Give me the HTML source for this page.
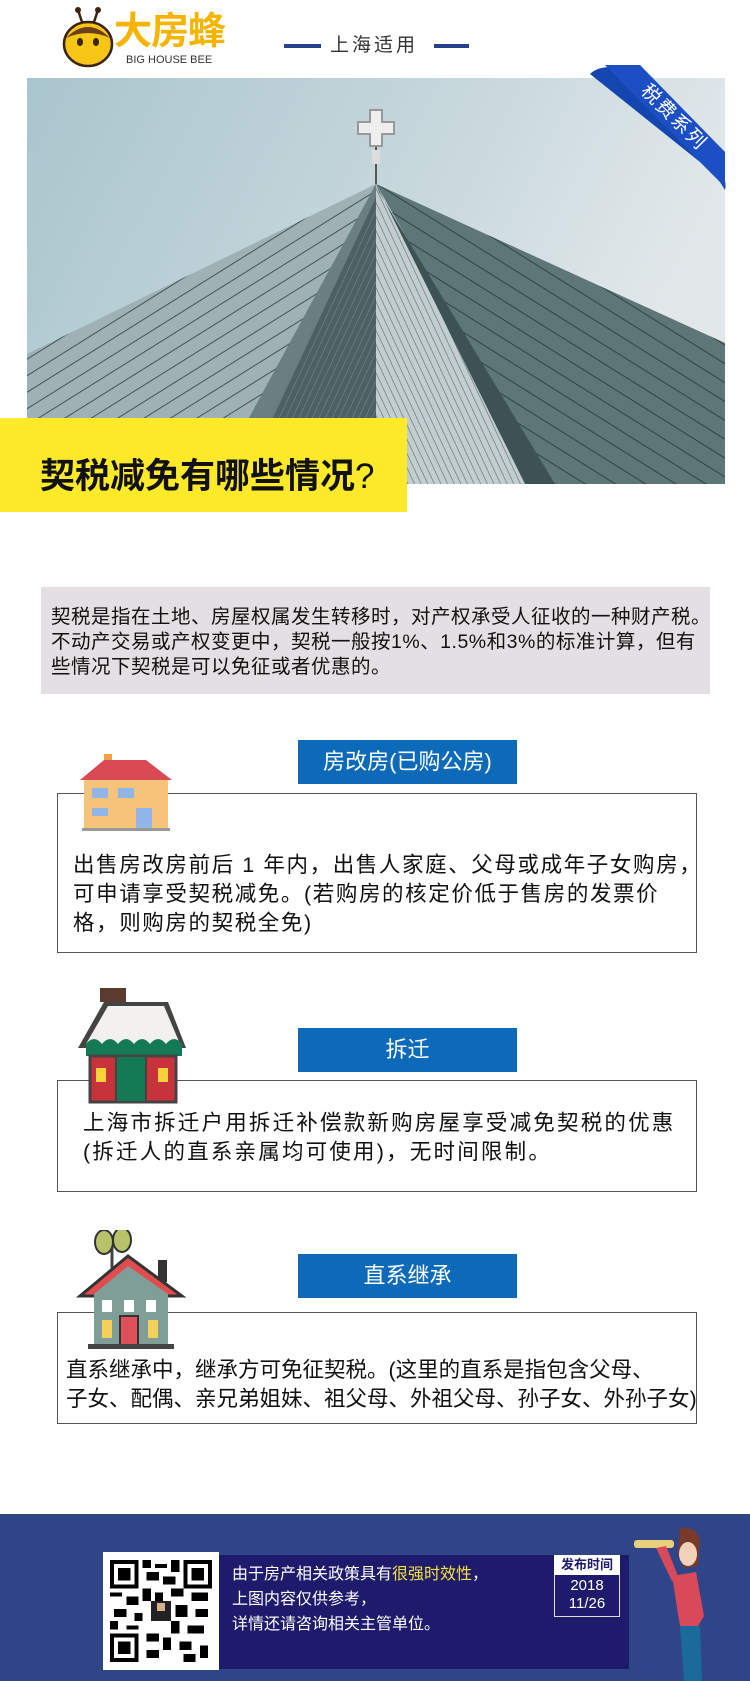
<!DOCTYPE html>
<html><head><meta charset="utf-8">
<style>
*{margin:0;padding:0;box-sizing:border-box}
body{width:750px;height:1681px;background:#fff;position:relative;overflow:hidden;font-family:"Liberation Sans","Noto Sans CJK SC",sans-serif;color:#111}
.abs{position:absolute}
.label{position:absolute;left:298px;width:219px;height:44px;background:#0d6ab9;color:#fff;font-size:22px;text-align:center;line-height:44px}
.box{position:absolute;left:57px;width:640px;border:1.5px solid #555;background:#fff}
.txt{position:absolute;font-size:21.5px;line-height:29px;color:#111;white-space:nowrap}
</style></head><body>

<!-- logo -->
<svg class="abs" style="left:58px;top:6px" width="60" height="62" viewBox="0 0 60 62">
<line x1="24" y1="16" x2="20" y2="4" stroke="#3a2412" stroke-width="2.5"/><circle cx="20" cy="4" r="3" fill="#3a2412"/>
<line x1="36" y1="16" x2="40" y2="4" stroke="#3a2412" stroke-width="2.5"/><circle cx="40" cy="4" r="3" fill="#3a2412"/>
<ellipse cx="30" cy="38" rx="24" ry="22" fill="#f7c515" stroke="#3a2412" stroke-width="2.5"/>
<path d="M8 32 Q30 10 52 32 Q30 22 8 32Z" fill="#6b3f1e"/>
<ellipse cx="22" cy="36" rx="3" ry="4" fill="#3a2412"/><ellipse cx="38" cy="36" rx="3" ry="4" fill="#3a2412"/>
</svg>
<div class="abs" style="left:114px;top:12px;font-size:38px;font-weight:bold;color:#f5b400;letter-spacing:-1px;line-height:40px">大房蜂</div>
<div class="abs" style="left:126px;top:54px;font-size:11px;color:#333;line-height:13px">BIG HOUSE BEE</div>
<div class="abs" style="left:284px;top:44px;width:37px;height:4px;background:#27408b"></div>
<div class="abs" style="left:434px;top:44px;width:35px;height:4px;background:#27408b"></div>
<div class="abs" style="left:330px;top:33px;font-size:19px;color:#333;letter-spacing:3px;line-height:26px">上海适用</div>

<!-- photo -->
<svg class="abs" style="left:27px;top:78px" width="698" height="406" viewBox="0 0 698 406">
<defs>
<linearGradient id="sky" x1="0" y1="0" x2="1" y2="0.3"><stop offset="0" stop-color="#a9c5cd"/><stop offset="0.6" stop-color="#c8d8dd"/><stop offset="1" stop-color="#e2e8ea"/></linearGradient>
<pattern id="s1" width="14" height="14" patternUnits="userSpaceOnUse" patternTransform="rotate(-32)"><rect width="14" height="14" fill="#9fb1b4"/><line x1="0" y1="0" x2="14" y2="0" stroke="#3f5458" stroke-width="2"/></pattern>
<pattern id="s2" width="6" height="6" patternUnits="userSpaceOnUse" patternTransform="rotate(-65)"><rect width="6" height="6" fill="#4d6164"/><line x1="0" y1="0" x2="6" y2="0" stroke="#7c8f92" stroke-width="1"/></pattern>
<pattern id="s3" width="6" height="6" patternUnits="userSpaceOnUse" patternTransform="rotate(65)"><rect width="6" height="6" fill="#c2cecf"/><line x1="0" y1="0" x2="6" y2="0" stroke="#5b6d70" stroke-width="1.2"/></pattern>
<pattern id="s4" width="16" height="16" patternUnits="userSpaceOnUse" patternTransform="rotate(32)"><rect width="16" height="16" fill="#5e7675"/><line x1="0" y1="0" x2="16" y2="0" stroke="#2f4445" stroke-width="2"/></pattern>
</defs>
<rect width="698" height="406" fill="url(#sky)"/>
<polygon points="349,106 0,276 0,406 200,406" fill="url(#s1)"/>
<polygon points="349,106 190,406 349,406" fill="url(#s2)"/>
<polygon points="349,106 349,406 510,406" fill="url(#s3)"/>
<polygon points="349,106 520,406 698,406 698,265" fill="url(#s4)"/>
<polygon points="349,106 186,406 214,406 349,118" fill="#6a7f82"/>
<polygon points="349,106 498,406 528,406 352,114" fill="#3d5253"/>
<line x1="349" y1="106" x2="349" y2="68" stroke="#555" stroke-width="2"/>
<rect x="345" y="72" width="8" height="14" fill="#ddd"/>
<path d="M343 32h12v12h12v12h-12v12h-12v-12h-12v-12h12z" fill="#eee" stroke="#999" stroke-width="2"/>
</svg>
<!-- ribbon -->
<svg class="abs" style="left:580px;top:62px" width="150" height="130" viewBox="0 0 150 130">
<path d="M10 12 Q20 2 45 6 L110 70 Q150 110 145 128 L140 120 L120 100 Z" fill="#1546b0"/>
<path d="M25 3 L60 3 L145 90 L145 125 Z" fill="#1c4fc4"/>
<text x="0" y="0" transform="translate(60 30) rotate(45)" font-size="19" fill="#fff" font-family="Liberation Sans,Noto Sans CJK SC,sans-serif" letter-spacing="2">税费系列</text>
</svg>
<div class="abs" style="left:0;top:418px;width:407px;height:94px;background:#fbe92a"></div>
<div class="abs" style="left:40px;top:456px;font-size:35px;font-weight:bold;line-height:42px;color:#111">契税减免有哪些情况<span style="font-weight:normal">?</span></div>

<!-- intro -->
<div class="abs" style="left:41px;top:587px;width:669px;height:107px;background:#e4dfe2"></div>
<div class="abs" style="left:51px;top:605px;font-size:19.5px;line-height:25px;color:#111;white-space:nowrap;letter-spacing:0.5px">契税是指在土地、房屋权属发生转移时，对产权承受人征收的一种财产税。<br>不动产交易或产权变更中，契税一般按1%、1.5%和3%的标准计算，但有<br>些情况下契税是可以免征或者优惠的。</div>

<!-- section 1 -->
<div class="label" style="top:740px">房改房(已购公房)</div>
<div class="box" style="top:793px;height:160px"></div>
<svg class="abs" style="left:78px;top:752px" width="96" height="82" viewBox="0 0 96 82">
<rect x="26" y="2" width="8" height="12" fill="#f2a04a"/>
<rect x="6" y="26" width="84" height="50" fill="#f6c37a"/>
<polygon points="2,28 26,8 68,8 94,28" fill="#d94a55"/>
<rect x="14" y="36" width="16" height="10" fill="#8fb6e6"/><rect x="40" y="36" width="16" height="10" fill="#8fb6e6"/>
<rect x="14" y="56" width="16" height="8" fill="#8fb6e6"/><rect x="58" y="56" width="16" height="20" fill="#8fb6e6"/>
<rect x="4" y="76" width="88" height="3" fill="#999"/>
</svg>
<div class="txt" style="left:73px;top:851px;letter-spacing:1.6px">出售房改房前后 1 年内，出售人家庭、父母或成年子女购房，<br>可申请享受契税减免。(若购房的核定价低于售房的发票价<br>格，则购房的契税全免)</div>

<!-- section 2 -->
<div class="label" style="top:1028px">拆迁</div>
<div class="box" style="top:1080px;height:112px"></div>
<svg class="abs" style="left:74px;top:986px" width="116" height="118" viewBox="0 0 116 118">
<rect x="26" y="2" width="26" height="14" fill="#5a3b2e"/>
<polygon points="4,62 30,16 94,16 112,62" fill="#444"/>
<polygon points="12,58 34,20 90,20 106,58" fill="#f3f0f0"/>
<path d="M12 58 Q20 48 28 58 Q36 48 44 58 Q52 48 60 58 Q68 48 76 58 Q84 48 92 58 Q100 48 108 58 L108 70 L12 70Z" fill="#147a55"/>
<rect x="16" y="70" width="86" height="46" fill="#c8323a" stroke="#444" stroke-width="3"/>
<rect x="42" y="70" width="30" height="46" fill="#147a55" stroke="#444" stroke-width="2"/>
<rect x="22" y="82" width="10" height="14" fill="#f5d23a"/><rect x="84" y="82" width="10" height="14" fill="#f5d23a"/>
</svg>
<div class="txt" style="left:83px;top:1109px;letter-spacing:2.2px">上海市拆迁户用拆迁补偿款新购房屋享受减免契税的优惠<br>(拆迁人的直系亲属均可使用)，无时间限制。</div>

<!-- section 3 -->
<div class="label" style="top:1254px">直系继承</div>
<div class="box" style="top:1312px;height:112px"></div>
<svg class="abs" style="left:76px;top:1230px" width="110" height="120" viewBox="0 0 110 120">
<line x1="36" y1="48" x2="36" y2="12" stroke="#444" stroke-width="3"/>
<ellipse cx="28" cy="12" rx="9" ry="12" fill="#b8c26a" stroke="#333" stroke-width="2"/>
<ellipse cx="46" cy="10" rx="9" ry="12" fill="#b8c26a" stroke="#333" stroke-width="2"/>
<rect x="82" y="30" width="9" height="22" fill="#333"/>
<polygon points="4,66 52,26 106,66" fill="#e04c50" stroke="#333" stroke-width="3"/>
<polygon points="18,64 52,36 92,64 92,116 18,116" fill="#7e9e96"/>
<rect x="26" y="70" width="10" height="12" fill="#fff"/><rect x="48" y="70" width="10" height="12" fill="#fff"/><rect x="70" y="70" width="10" height="12" fill="#fff"/>
<rect x="26" y="90" width="10" height="18" fill="#f4cf5a"/><rect x="72" y="90" width="10" height="18" fill="#f4cf5a"/>
<rect x="44" y="86" width="18" height="30" fill="#e0505a" stroke="#333" stroke-width="2"/>
<rect x="12" y="114" width="86" height="5" fill="#444"/>
</svg>
<div class="txt" style="left:66px;top:1356px">直系继承中，继承方可免征契税。(这里的直系是指包含父母、<br>子女、配偶、亲兄弟姐妹、祖父母、外祖父母、孙子女、外孙子女)</div>

<!-- footer -->
<div class="abs" style="left:0;top:1514px;width:750px;height:167px;background:#2f4587"></div>
<div class="abs" style="left:219px;top:1555px;width:410px;height:114px;background:#1e1a6c"></div>
<div class="abs" style="left:103px;top:1552px;width:116px;height:118px;background:#fff"></div>
<svg class="abs" style="left:110px;top:1560px" width="102" height="102" viewBox="0 0 25 25" shape-rendering="crispEdges">
<rect x="0" y="0" width="7" height="7" fill="#000"/><rect x="1" y="1" width="5" height="5" fill="#fff"/><rect x="2" y="2" width="3" height="3" fill="#000"/>
<rect x="18" y="0" width="7" height="7" fill="#000"/><rect x="19" y="1" width="5" height="5" fill="#fff"/><rect x="20" y="2" width="3" height="3" fill="#000"/>
<rect x="0" y="18" width="7" height="7" fill="#000"/><rect x="1" y="19" width="5" height="5" fill="#fff"/><rect x="2" y="20" width="3" height="3" fill="#000"/>
<path d="M8 0h2v2h-2zM11 1h3v1h-3zM15 0h2v3h-2zM9 3h3v2h-3zM13 4h3v2h-3zM8 7h2v3h-2zM0 8h3v1h-3zM4 9h3v2h-3zM11 8h2v2h-2zM15 7h3v2h-3zM20 8h4v2h-4zM1 12h3v2h-3zM6 13h2v2h-2zM16 11h3v3h-3zM21 12h3v2h-3zM0 15h2v2h-2zM4 16h3v1h-3zM15 15h2v3h-2zM19 16h4v2h-4zM9 18h3v2h-3zM13 19h2v3h-2zM17 20h3v2h-3zM22 21h2v3h-2zM9 22h3v2h-3zM18 23h3v2h-3z" fill="#000"/>
<rect x="10" y="10" width="5" height="5" fill="#222"/><rect x="11.5" y="10.5" width="2" height="2" fill="#d9b08c"/>
</svg>
<div class="abs" style="left:232px;top:1562px;font-size:16px;line-height:25px;color:#fff;white-space:nowrap">由于房产相关政策具有<span style="color:#f4e43a">很强时效性</span>，<br>上图内容仅供参考，<br>详情还请咨询相关主管单位。</div>
<div class="abs" style="left:554px;top:1555px;width:66px;height:62px;border:1px solid #ddd;background:#1e1a6c"></div>
<div class="abs" style="left:554px;top:1555px;width:66px;height:20px;background:#fff;color:#1e1a6c;font-size:13px;font-weight:bold;text-align:center;line-height:20px">发布时间</div>
<div class="abs" style="left:554px;top:1577px;width:66px;text-align:center;color:#fff;font-size:15px;line-height:18px">2018<br>11/26</div>
<svg class="abs" style="left:632px;top:1526px" width="80" height="155" viewBox="0 0 80 155">
<rect x="2" y="14" width="40" height="8" rx="3" fill="#e8d07a"/>
<path d="M48 2 Q64 0 68 14 L66 40 L52 42 L46 28Z" fill="#7a3a2a"/>
<ellipse cx="56" cy="28" rx="9" ry="12" fill="#f2d2b8"/>
<path d="M40 50 L64 46 L72 90 L66 100 L48 100Z" fill="#d9495a"/>
<path d="M24 22 L40 55 L48 55 L34 20Z" fill="#d9495a"/>
<path d="M48 100 L68 100 L70 155 L52 155Z" fill="#1a6a9a"/>
</svg>
</body></html>
